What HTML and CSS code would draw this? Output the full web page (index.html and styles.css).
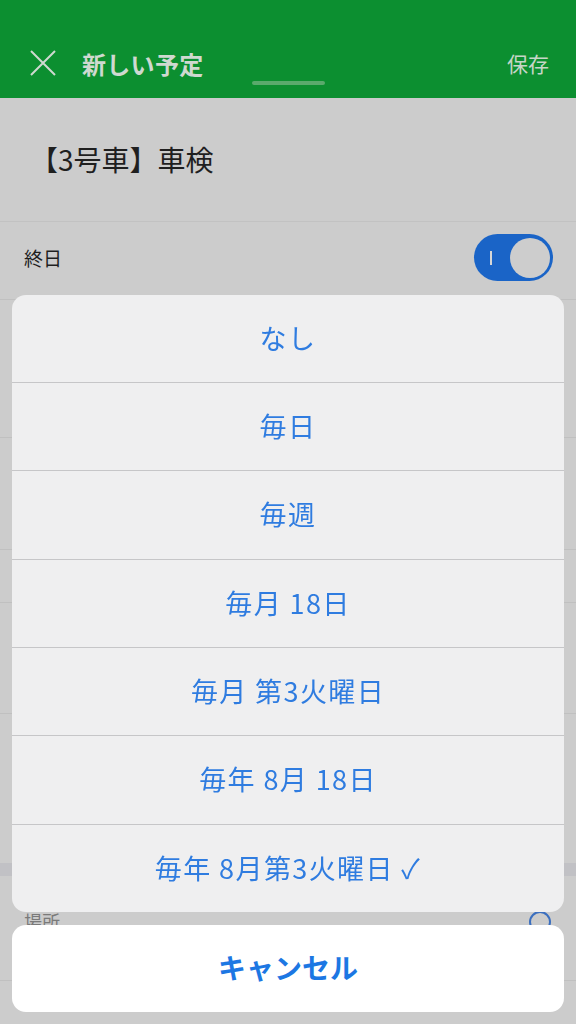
FILE: index.html
```html
<!DOCTYPE html>
<html lang="ja">
<head>
<meta charset="utf-8">
<title>新しい予定</title>
<link rel="stylesheet" href="styles.css">
</head>
<body>
<div class="page">
  <header class="topbar">
    <svg class="close" viewBox="0 0 26 26" width="26" height="26"><path d="M1 1 L25 25 M25 1 L1 25" stroke="#cfd9d0" stroke-width="2" fill="none"/></svg>
    <span class="title">新しい予定</span>
    <span class="tabbar"></span>
    <span class="save">保存</span>
  </header>
  <section class="event-title">【3号車】車検</section>
  <div class="row allday">
    <span class="label">終日</span>
    <span class="toggle"><span class="on-mark"></span><span class="knob"></span></span>
  </div>
  <div class="row h138"></div>
  <div class="row h112"></div>
  <div class="row h53"></div>
  <div class="row h111"></div>
  <div class="row h149 noline"></div>
  <div class="band"></div>
  <div class="row place">
    <span class="label">場所</span>
    <span class="pin"></span>
  </div>
  <div class="row h60"></div>
</div>

<div class="overlay">
  <div class="sheet">
    <div class="group">
      <div class="opt">なし</div>
      <div class="opt">毎日</div>
      <div class="opt">毎週</div>
      <div class="opt">毎月 18日</div>
      <div class="opt">毎月 第3火曜日</div>
      <div class="opt">毎年 8月 18日</div>
      <div class="opt">毎年 8月第3火曜日 ✓</div>
    </div>
    <div class="cancel">キャンセル</div>
  </div>
</div>
</body>
</html>
```

FILE: styles.css
```css
* { box-sizing: border-box; }
html, body {
  margin: 0;
  padding: 0;
  background: #cccccc;
  font-family: "Noto Sans CJK JP", "Noto Sans", sans-serif;
}
.page {
  width: 576px;
  height: 1024px;
  overflow: hidden;
  background: #cccccc;
}
.topbar {
  height: 98px;
  background: #0c8f30;
  display: flex;
  align-items: center;
  padding: 28px 27px 0 30px;
  position: relative;
}
.close { flex: none; }
.title {
  margin-left: 26px;
  color: #cfd9d0;
  font-size: 24px;
  font-weight: bold;
  letter-spacing: 0.3px;
}
.tabbar {
  position: absolute;
  left: 252px;
  top: 81px;
  width: 73px;
  height: 4px;
  border-radius: 2px;
  background: #5aaa6c;
}
.save {
  margin-left: auto;
  color: #c6d6c8;
  font-size: 21px;
}
.event-title {
  height: 124px;
  display: flex;
  align-items: center;
  padding: 0 0 2px 30px;
  font-size: 28px;
  color: #1f1f1f;
  border-bottom: 1px solid #c2c2c2;
}
.row {
  display: flex;
  align-items: center;
  padding: 0 24px;
  border-bottom: 1px solid #c0c0c0;
}
.row.noline { border-bottom: none; }
.allday { height: 78px; padding-bottom: 6px; }
.label { font-size: 19px; color: #1f1f1f; }
.toggle {
  margin-left: auto;
  margin-right: -1px;
  width: 79px;
  height: 47px;
  border-radius: 24px;
  background: #1a64c7;
  display: flex;
  align-items: center;
  padding: 0 3px 0 16px;
}
.on-mark {
  width: 2px;
  height: 14px;
  background: #d6d6d6;
}
.knob {
  margin-left: auto;
  width: 40px;
  height: 40px;
  border-radius: 50%;
  background: #cdcdcd;
}
.h138 { height: 138px; }
.h112 { height: 112px; }
.h53 { height: 53px; }
.h111 { height: 111px; }
.h149 { height: 149px; }
.h60 { height: 60px; }
.band { height: 13px; background: #c1c1c5; }
.place {
  height: 105px;
  align-items: flex-start;
  padding-top: 32px;
}
.place .label { color: #7a7a7a; font-size: 18px; }
.pin {
  margin-left: auto;
  margin-right: 1px;
  margin-top: 3px;
  width: 22px;
  height: 22px;
  border-radius: 50%;
  border: 2px solid #3b6fbf;
}
.overlay {
  position: fixed;
  left: 0;
  top: 0;
  width: 576px;
  height: 1024px;
}
.sheet {
  position: absolute;
  left: 12px;
  right: 12px;
  top: 295px;
  display: flex;
  flex-direction: column;
  gap: 13px;
}
.group {
  background: #efeff0;
  border-radius: 14px;
  overflow: hidden;
}
.opt {
  height: 88px;
  display: flex;
  align-items: center;
  justify-content: center;
  padding-bottom: 3px;
  font-size: 27px;
  letter-spacing: 1.4px;
  color: #2f7ce0;
  border-bottom: 1px solid #c6c6c8;
}
.opt:nth-child(3), .opt:nth-child(6) { height: 89px; }
.opt:last-child { border-bottom: none; height: 87px; }
.cancel {
  height: 87px;
  background: #ffffff;
  border-radius: 14px;
  display: flex;
  align-items: center;
  justify-content: center;
  padding-bottom: 4px;
  font-size: 28px;
  font-weight: bold;
  color: #1c77e3;
}
```
